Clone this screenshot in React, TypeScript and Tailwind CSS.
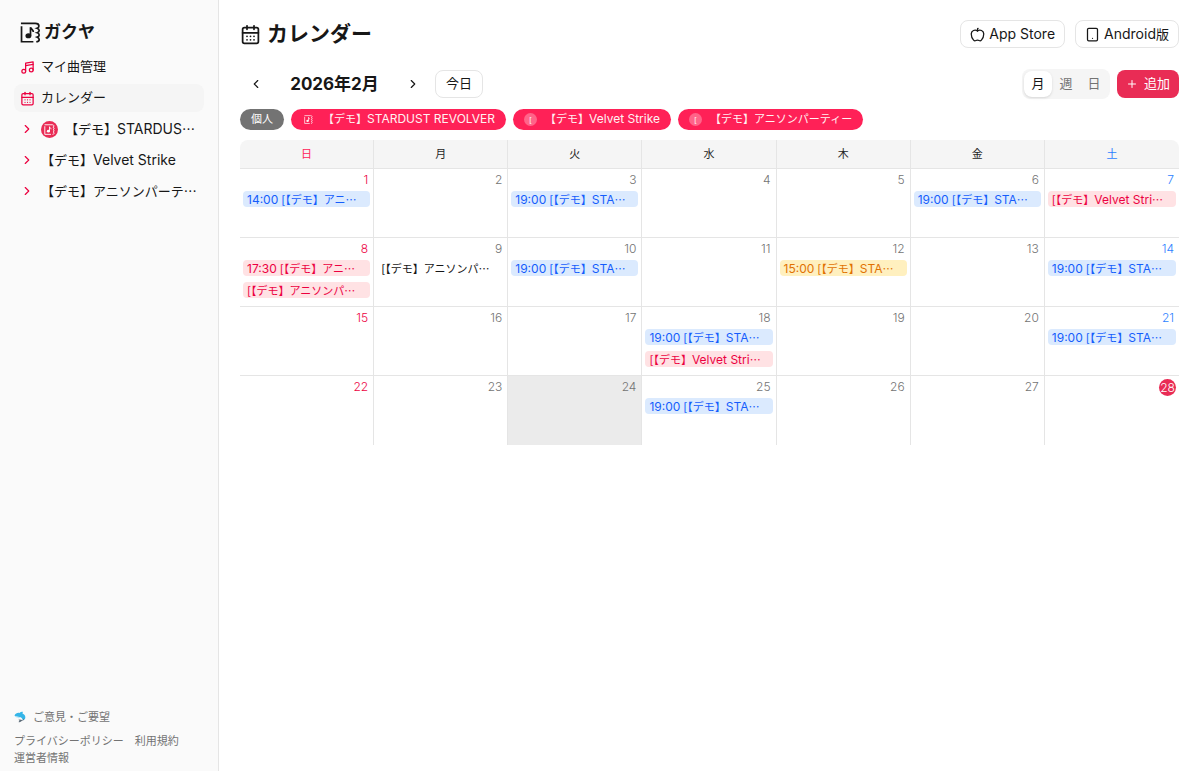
import {
  Apple,
  CalendarDays,
  ChevronLeft,
  ChevronRight,
  Music4,
  Plus,
  Tablet,
} from "lucide-react";

type Tone = "blue" | "red" | "yellow" | "plain";

interface CalendarEvent {
  name: string;
  time?: string;
  tone: Tone;
}

const WEEKDAYS = ["日", "月", "火", "水", "木", "金", "土"];

const TODAY = 28;
const SELECTED = 24;

const EVENTS: Record<number, CalendarEvent[]> = {
  1: [{ time: "14:00", name: "アニ", tone: "blue" }],
  3: [{ time: "19:00", name: "STA", tone: "blue" }],
  6: [{ time: "19:00", name: "STA", tone: "blue" }],
  7: [{ name: "Velvet Stri", tone: "red" }],
  8: [
    { time: "17:30", name: "アニ", tone: "red" },
    { name: "アニソンパ", tone: "red" },
  ],
  9: [{ name: "アニソンパ", tone: "plain" }],
  10: [{ time: "19:00", name: "STA", tone: "blue" }],
  12: [{ time: "15:00", name: "STA", tone: "yellow" }],
  14: [{ time: "19:00", name: "STA", tone: "blue" }],
  18: [
    { time: "19:00", name: "STA", tone: "blue" },
    { name: "Velvet Stri", tone: "red" },
  ],
  21: [{ time: "19:00", name: "STA", tone: "blue" }],
  25: [{ time: "19:00", name: "STA", tone: "blue" }],
};

const TONES: Record<Tone, string> = {
  blue: "bg-blue-100 text-blue-600",
  red: "bg-[#ffe2e4] text-rose-600",
  yellow: "bg-[#fff0bf] text-amber-600",
  plain: "text-neutral-900",
};

const isLatin = (text: string) => /^[A-Za-z ]+$/.test(text);

const LogoMark = ({ className }: { className?: string }) => (
  <svg viewBox="0 0 22 22" fill="none" stroke="currentColor" className={className}>
    <path
      d="M1 1.500h15c2.500 0 3.800 1 3.800 2.600 0 1.300-.8 2-2 2.400 1.500.5 2.300 1.300 2.300 2.500s-.8 1.900-2 2.300c1.300.4 2 1.200 2 2.300 0 1.200-.8 1.900-2 2.300 1.300.5 2 1.200 2 2.400 0 1.700-1.300 2.400-3.100 2.400M1.600 4.500v16.200H14"
      strokeWidth="1.800"
    />
    <ellipse cx="8.800" cy="14.400" rx="3.100" ry="2.700" fill="currentColor" stroke="none" />
    <path d="M11 14.500V5.500c.3 2 3 2.300 3 5" strokeWidth="1.800" />
  </svg>
);

const Dolphin = () => (
  <svg viewBox="0 0 24 24" className="size-3">
    <path
      d="M1 9c2-4 6-6 10-5 2-2 5-3 7-2-1 1-1 2-1 3 5 2 7 6 5 11-2 2-4 2-5 1-1-4-4-5-8-5-3 0-6-1-8-3z"
      fill="#35b5e8"
    />
    <path d="M2 10c4 1 8 1 11 3-3 2-5 2-6 0-2 0-4-1-5-3z" fill="#b9e5f5" />
    <path d="M20 15c1 3-2 4-5 5-1 2-4 3-6 2 1-1 2-2 2-3-1-1-2-1-3-1 3-2 6-1 8 0 1 0 2-1 4-3z" fill="#5b6b78" />
  </svg>
);

const Ellipsis = () => (
  <span lang="ja" className="inline-block font-['Noto_Sans_CJK_JP',sans-serif]">
    …
  </span>
);

const BandLink = ({
  name,
  hasLogo,
  shortened,
}: {
  name: string;
  hasLogo?: boolean;
  shortened?: boolean;
}) => (
  <a href="#" className="flex h-7 items-center gap-[7px] rounded-lg px-1.5 whitespace-nowrap">
    <ChevronRight className="size-3.5 shrink-0 text-rose-600" />
    {hasLogo && (
      <span className="flex size-[17px] shrink-0 items-center justify-center rounded-full bg-[#e92c55] text-white">
        <LogoMark className="size-[11px]" />
      </span>
    )}
    <span className="leading-5">
      【デモ】
      <span className={isLatin(name) ? "text-sm" : ""}>{name}</span>
      {shortened && <Ellipsis />}
    </span>
  </a>
);

const Sidebar = () => (
  <aside className="flex w-[219px] shrink-0 flex-col border-r border-neutral-200 bg-neutral-50 px-3.5 pt-5 pb-1">
    <a href="#" className="flex items-center gap-[3px] px-1.5 text-[17px] leading-6 font-bold">
      <LogoMark className="size-[21px]" />
      ガクヤ
    </a>
    <nav className="mt-[9px] flex flex-col gap-[3px] text-[13px]">
      <a href="#" className="flex h-7 items-center gap-1.5 rounded-lg px-1.5">
        <Music4 className="size-[15px] text-rose-600" />
        マイ曲管理
      </a>
      <a href="#" className="flex h-7 items-center gap-1.5 rounded-lg bg-neutral-100 px-1.5">
        <CalendarDays className="size-[15px] text-rose-600" />
        カレンダー
      </a>
      <BandLink name="STARDUS" hasLogo shortened />
      <BandLink name="Velvet Strike" />
      <BandLink name="アニソンパーテ" shortened />
    </nav>
    <div className="mt-auto text-[11px] text-neutral-500">
      <a href="#" className="flex items-center gap-[7px]">
        <Dolphin />
        ご意見・ご要望
      </a>
      <div className="mt-2 flex flex-wrap gap-x-[11px] leading-[17px]">
        <a href="#">プライバシーポリシー</a>
        <a href="#">利用規約</a>
        <a href="#">運営者情報</a>
      </div>
    </div>
  </aside>
);

const FilterChip = ({ name, initial }: { name: string; initial?: string }) => (
  <button className="flex h-[21px] items-center gap-2 rounded-full bg-[#ff2157] px-[11px] text-rose-50">
    {initial ? (
      <span className="flex size-[13px] items-center justify-center rounded-full bg-white/30 text-[8px] leading-none">
        {initial}
      </span>
    ) : (
      <span className="flex size-[13px] items-center justify-center">
        <LogoMark className="size-[9px]" />
      </span>
    )}
    <span>
      【デモ】
      <span className={isLatin(name) ? "text-xs" : ""}>{name}</span>
    </span>
  </button>
);

const EventItem = ({ time, name, tone }: CalendarEvent) => (
  <li>
    <button
      className={`block h-4 w-full rounded px-1 text-left text-[11px] leading-4 whitespace-nowrap ${TONES[tone]}`}
    >
      {time && <span className="mr-[3px] text-xs leading-4">{time}</span>}
      <span className="[font-feature-settings:'halt']">[【</span>
      デモ】
      <span className={isLatin(name) ? "text-xs leading-4" : ""}>{name}</span>
      <Ellipsis />
    </button>
  </li>
);

const DayCell = ({ day }: { day: number }) => {
  const weekday = (day - 1) % 7;
  const color =
    weekday === 0 ? "text-rose-600" : weekday === 6 ? "text-blue-500" : "text-neutral-500";

  return (
    <td
      className={`h-[69px] border-neutral-200 px-[3px] pt-0.5 align-top ${
        weekday < 6 ? "border-r" : ""
      } ${day > 21 ? "" : "border-b"} ${day === SELECTED ? "bg-[#ebebeb]" : ""}`}
    >
      <div className={`flex h-[17px] justify-end text-xs leading-[17px] font-light ${color}`}>
        {day === TODAY ? (
          <span className="mt-px flex size-[17px] items-center justify-center rounded-full bg-[#e92c55] text-white">
            {day}
          </span>
        ) : (
          <span className="pr-0.5">{day}</span>
        )}
      </div>
      <ul className="mt-[3px] flex flex-col gap-1.5">
        {EVENTS[day]?.map((event, i) => (
          <EventItem key={i} {...event} />
        ))}
      </ul>
    </td>
  );
};

const MonthTable = () => (
  <table className="mt-2.5 w-full table-fixed border-separate border-spacing-0 overflow-hidden rounded-lg">
    <thead>
      <tr>
        {WEEKDAYS.map((name, i) => (
          <th
            key={name}
            className={`h-[29px] border-b border-neutral-200 bg-neutral-100 text-[11px] font-normal ${
              i === 0 ? "text-rose-500" : i === 6 ? "text-blue-500" : "text-neutral-800"
            } ${i < 6 ? "border-r" : ""}`}
          >
            {name}
          </th>
        ))}
      </tr>
    </thead>
    <tbody>
      {[0, 1, 2, 3].map((week) => (
        <tr key={week}>
          {WEEKDAYS.map((name, i) => (
            <DayCell key={name} day={week * 7 + i + 1} />
          ))}
        </tr>
      ))}
    </tbody>
  </table>
);

const App = () => (
  <div className="flex min-h-screen bg-white font-[Inter,'Noto_Sans_CJK_JP',sans-serif] text-neutral-900">
    <Sidebar />
    <main className="min-w-0 flex-1 px-[21px] py-5">
      <header className="flex h-7 items-center justify-between">
        <h1 className="flex items-center gap-1.5 text-[21px] leading-7 font-bold">
          <CalendarDays className="size-[21px]" />
          カレンダー
        </h1>
        <div className="flex gap-2.5 text-sm">
          <a href="#" className="flex h-7 items-center gap-1 rounded-lg border border-neutral-200 px-[9px]">
            <Apple className="size-[15px]" />
            App Store
          </a>
          <a href="#" className="flex h-7 items-center gap-1 rounded-lg border border-neutral-200 px-[9px]">
            <Tablet className="size-[15px]" />
            <span>
              Android<span className="text-[13px]">版</span>
            </span>
          </a>
        </div>
      </header>

      <div className="mt-[22px] flex h-7 items-center justify-between">
        <div className="flex items-center">
          <button aria-label="前の月" className="flex w-8 justify-center">
            <ChevronLeft className="size-3.5" />
          </button>
          <h2 className="w-[125px] text-center text-[17px] leading-7 font-bold">2026年2月</h2>
          <button aria-label="次の月" className="flex w-8 justify-center">
            <ChevronRight className="size-3.5" />
          </button>
          <button className="ml-1.5 h-7 rounded-lg border border-neutral-200 px-2.5 text-[13px]">
            今日
          </button>
        </div>
        <div className="flex items-center gap-[7px] text-[13px]">
          <div className="flex rounded-lg bg-neutral-100 p-0.5 text-neutral-500">
            <button className="h-[26px] w-7 rounded-lg bg-white text-neutral-900 shadow-sm">月</button>
            <button className="h-[26px] w-7">週</button>
            <button className="h-[26px] w-7">日</button>
          </div>
          <button className="flex h-7 items-center gap-1.5 rounded-lg bg-[#e92c55] px-[9px] text-white">
            <Plus className="size-3" />
            追加
          </button>
        </div>
      </div>

      <div className="mt-[11px] flex flex-wrap gap-[7px] text-[11px]">
        <button className="h-[21px] rounded-full bg-[#737373] px-[11px] text-white">個人</button>
        <FilterChip name="STARDUST REVOLVER" />
        <FilterChip name="Velvet Strike" initial="[" />
        <FilterChip name="アニソンパーティー" initial="[" />
      </div>

      <MonthTable />
    </main>
  </div>
);

export default App;
